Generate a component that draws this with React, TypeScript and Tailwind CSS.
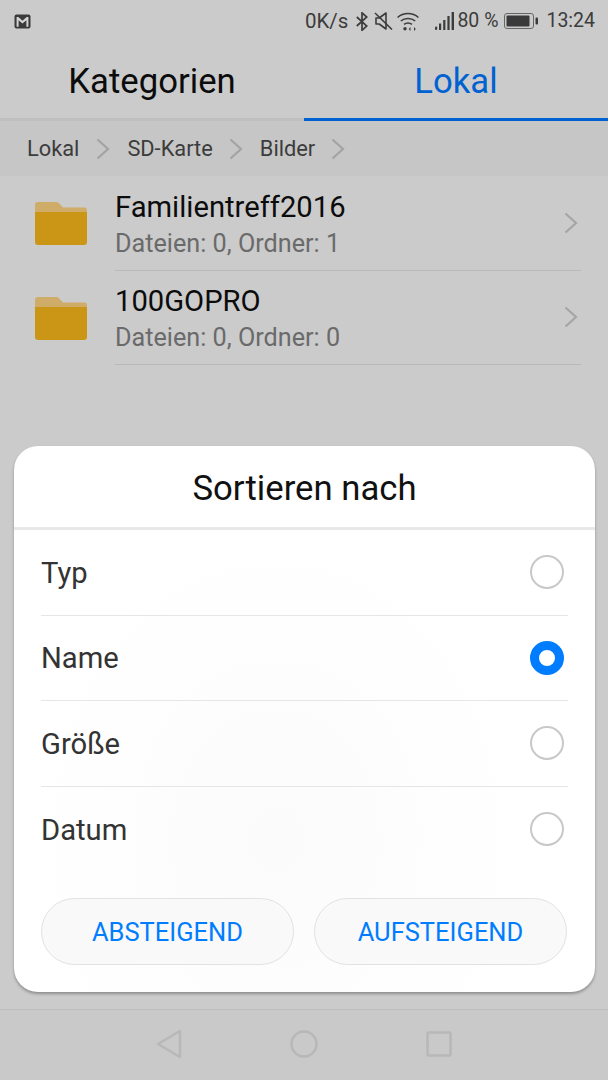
import React from 'react';

const folders = [
  { name: 'Familientreff2016', info: 'Dateien: 0, Ordner: 1' },
  { name: '100GOPRO', info: 'Dateien: 0, Ordner: 0' },
];

const sortOptions = ['Typ', 'Name', 'Größe', 'Datum'];

function MailIcon() {
  return (
    <svg width="17" height="15" viewBox="0 0 17 15">
      <rect x="0.5" y="0.5" width="16" height="14" rx="2" fill="#3a3a3a" />
      <path d="M2.6 12.8V3h1.7l4.2 3.8L12.7 3h1.7v9.8h-2V6.3L8.5 9.6 4.6 6.3v6.5z" fill="#d4d4d4" />
    </svg>
  );
}

function StatusIcons() {
  return (
    <>
      <svg width="12" height="19" viewBox="0 0 12 19" fill="none" stroke="#3c3c3c" strokeWidth="1.7" className="ml-[8px]">
        <path d="M.8 5l10 9-4.8 4.3V.8L10.8 5l-10 9" />
      </svg>
      <svg width="19" height="18" viewBox="0 0 19 18" fill="none" stroke="#3c3c3c" strokeWidth="1.6" className="ml-[6px]">
        <path d="M2 6h3.2L12 1v16L5.2 12H2z" strokeLinejoin="round" />
        <path d="M1 1l17 16.5" />
      </svg>
      <svg width="22" height="19" viewBox="0 0 22 19" fill="none" stroke="#3c3c3c" strokeWidth="1.6" className="ml-[4px]">
        <path d="M.6 5.5C6.5.2 15.5.2 21.4 5.5" />
        <path d="M3.8 9C7.8 5.6 14.2 5.6 18.2 9" />
        <path d="M7 12.4c2.4-1.7 5.6-1.7 8 0" />
        <circle cx="8" cy="16.8" r="1.7" fill="#3c3c3c" stroke="none" />
        <path d="M13.5 15v4l-1.8-2zM17 15v4l1.8-2z" fill="#3c3c3c" stroke="none" />
      </svg>
      <svg width="19" height="18" viewBox="0 0 19 18" fill="#3c3c3c" className="ml-[16px]">
        <rect x="0" y="14.5" width="2.2" height="3.5" rx="1" />
        <rect x="4" y="11.5" width="2.2" height="6.5" />
        <rect x="8.2" y="8" width="2.2" height="10" />
        <rect x="12.4" y="4" width="2.2" height="14" />
        <rect x="16.6" y="0" width="2.4" height="18" />
      </svg>
    </>
  );
}

function Battery() {
  return (
    <svg width="34" height="16" viewBox="0 0 34 16" className="ml-[6px]">
      <rect x="0.5" y="0.5" width="29" height="15" rx="2.5" fill="none" stroke="#666" />
      <rect x="2.5" y="2.5" width="23" height="11" rx="1" fill="#3a3a3a" />
      <rect x="31.5" y="4.5" width="2.5" height="7" rx="1" fill="#3a3a3a" />
    </svg>
  );
}

function FolderIcon() {
  return (
    <svg width="52" height="44" viewBox="0 0 52 44" className="shrink-0">
      <path d="M0 4a3 3 0 013-3h18c1.5 0 2.5.5 3.2 1.5L28 6.5h21a3 3 0 013 3V20H0z" fill="#cfac67" />
      <path d="M0 11h52v30a3 3 0 01-3 3H3a3 3 0 01-3-3z" fill="#cb9616" />
    </svg>
  );
}

function Chevron({ className }: { className?: string }) {
  return (
    <svg width="14" height="22" viewBox="0 0 14 22" fill="none" stroke="currentColor" strokeWidth="2.2" className={className}>
      <path d="M1.5 1.5L12 11 1.5 20.5" />
    </svg>
  );
}

export default function App() {
  return (
    <div className="relative flex h-[1080px] w-[608px] flex-col overflow-hidden bg-[#cbcbcb] font-['Roboto',sans-serif]">
      {/* status bar */}
      <div className="flex h-[42px] items-center pl-[14px] pr-[13px]">
        <MailIcon />
        <div className="ml-auto flex items-center text-[19.5px] text-[#3c3c3c]">
          <span className="text-[20.5px]">0K/s</span>
          <StatusIcons />
          <span className="ml-[3px]">80 %</span>
          <Battery />
          <span className="ml-[8px]">13:24</span>
        </div>
      </div>

      {/* tabs */}
      <div className="flex h-[79px] border-b-[3px] border-[#bfbfbf]">
        <div className="flex w-[304px] items-center justify-center pt-[2px] text-[34.7px] text-[#0c0c0c]">Kategorien</div>
        <div className="-mb-[3px] flex w-[304px] items-center justify-center border-b-[3px] border-[#0062d1] pt-[2px] text-[34.7px] text-[#0062d1]">
          Lokal
        </div>
      </div>

      {/* breadcrumb */}
      <div className="flex h-[55px] items-center bg-[#c6c6c6] pl-[27px] text-[21.8px] text-[#3c3c3c]">
        <span className="pt-[2px]">Lokal</span>
        <Chevron className="ml-[17px] mr-[17px] text-[#a3a3a3]" />
        <span className="pt-[2px]">SD-Karte</span>
        <Chevron className="ml-[16px] mr-[17px] text-[#a3a3a3]" />
        <span className="pt-[2px]">Bilder</span>
        <Chevron className="ml-[16px] text-[#a3a3a3]" />
      </div>

      {/* folder list */}
      <div className="flex flex-col">
        {folders.map((f) => (
          <div key={f.name} className="flex h-[94.5px] items-center pl-[35px]">
            <FolderIcon />
            <div className="ml-[28px] flex h-full w-[466px] items-center border-b-[1.5px] border-[#b9b9b9] pr-[3px]">
              <div className="flex-1 pt-[3px]">
                <div className="text-[29.2px] leading-[36px] text-[#0c0c0c]">{f.name}</div>
                <div className="mt-[3px] text-[25.2px] leading-[32px] text-[#6a6a6a]">{f.info}</div>
              </div>
              <Chevron className="text-[#a5a5a5]" />
            </div>
          </div>
        ))}
      </div>

      {/* nav bar */}
      <div className="mt-auto flex h-[71px] items-center justify-center gap-[108px] border-t border-[#bcbcbc] bg-[#c9c9c9] pb-[2px] pr-[1px] text-[#b8b8b8]">
        <svg width="26" height="30" viewBox="0 0 26 30" fill="none" stroke="currentColor" strokeWidth="2.6" strokeLinejoin="round">
          <path d="M24 2v26L2 15z" />
        </svg>
        <svg width="28" height="28" viewBox="0 0 28 28" fill="none" stroke="currentColor" strokeWidth="2.6">
          <circle cx="14" cy="14" r="12.5" />
        </svg>
        <svg width="26" height="26" viewBox="0 0 26 26" fill="none" stroke="currentColor" strokeWidth="2.6" strokeLinejoin="round">
          <rect x="1.5" y="1.5" width="23" height="23" rx="1" />
        </svg>
      </div>

      {/* sort dialog */}
      <div className="absolute left-[14px] top-[446px] flex h-[546px] w-[581px] flex-col rounded-[24px] bg-white bg-[radial-gradient(ellipse_at_45%_72%,#fbfbfb_0%,#ffffff_55%)] shadow-[0_2px_3px_rgba(0,0,0,0.3)]">
        <div className="flex h-[84px] items-center justify-center border-b-[3px] border-[#e8e8e8] pt-[3px] text-[34.7px] text-[#111]">
          Sortieren nach
        </div>
        <div className="flex flex-col px-[27px]">
          {sortOptions.map((opt, i) => (
            <div
              key={opt}
              className={
                i < sortOptions.length - 1
                  ? 'flex h-[85.5px] items-center justify-between border-b border-[#e6e6e6] pr-[4px] text-[29.2px] text-[#333]'
                  : 'flex h-[85.5px] items-center justify-between pr-[4px] text-[29.2px] text-[#333]'
              }
            >
              <span className="pt-[3px]">{opt}</span>
              {opt === 'Name' ? (
                <span className="box-border size-[34px] rounded-full border-[9px] border-[#007dff] bg-white" />
              ) : (
                <span className="box-border size-[34px] rounded-full border-2 border-[#c8c8c8]" />
              )}
            </div>
          ))}
        </div>
        <div className="mt-[26px] flex justify-between pl-[27px] pr-[28px]">
          {['ABSTEIGEND', 'AUFSTEIGEND'].map((label) => (
            <div
              key={label}
              className="flex h-[67px] w-[253px] items-center justify-center rounded-full border border-[#e2e2e2] bg-[#f9f9f9] pt-[2px] text-[25.5px] text-[#007dff]"
            >
              {label}
            </div>
          ))}
        </div>
      </div>
    </div>
  );
}
